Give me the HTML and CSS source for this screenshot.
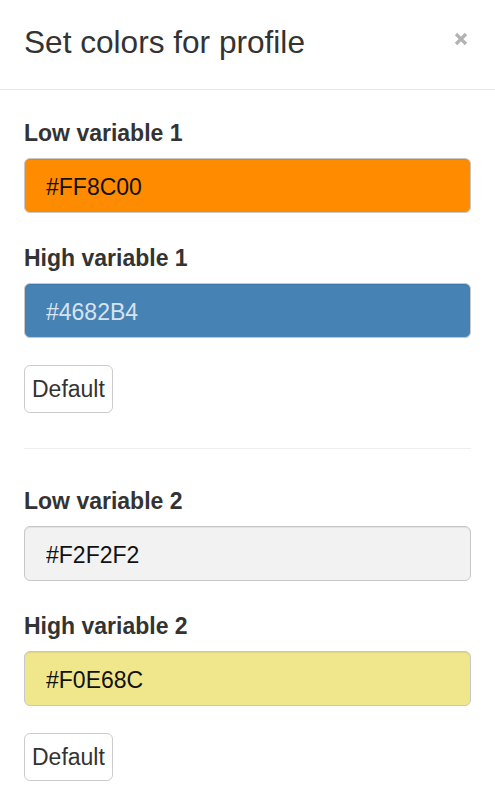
FILE: index.html
```html
<!DOCTYPE html>
<html lang="en">
<head>
<meta charset="utf-8">
<title>Set colors for profile</title>
<link rel="stylesheet" href="styles.css">
</head>
<body>
<div class="modal">
  <div class="modal-header">
    <h4 class="modal-title">Set colors for profile</h4>
    <button class="close" type="button" aria-label="Close">
      <svg width="14" height="14" viewBox="0 0 14 14"><path d="M2 2 L12 12 M12 2 L2 12" stroke="currentColor" stroke-width="3.2" stroke-linecap="butt" fill="none"/></svg>
    </button>
  </div>
  <div class="modal-body">
    <div class="form-group">
      <label class="control-label">Low variable 1</label>
      <input class="form-control c-orange" type="text" value="#FF8C00">
    </div>
    <div class="form-group last">
      <label class="control-label">High variable 1</label>
      <input class="form-control c-blue" type="text" value="#4682B4">
    </div>
    <button class="btn" type="button">Default</button>
    <hr class="divider">
    <div class="form-group">
      <label class="control-label">Low variable 2</label>
      <input class="form-control c-grey" type="text" value="#F2F2F2">
    </div>
    <div class="form-group last">
      <label class="control-label">High variable 2</label>
      <input class="form-control c-yellow" type="text" value="#F0E68C">
    </div>
    <button class="btn" type="button">Default</button>
  </div>
</div>
</body>
</html>
```

FILE: styles.css
```css
* { box-sizing: border-box; }
html, body {
  margin: 0;
  padding: 0;
  background: #fff;
}
body {
  font-family: "Liberation Sans", Arial, Helvetica, sans-serif;
  color: #333;
}
.modal {
  width: 495px;
}
.modal-header {
  display: flex;
  justify-content: space-between;
  align-items: flex-start;
  padding: 22px 24px 26px 24px;
  border-bottom: 1px solid #e5e5e5;
}
.modal-title {
  margin: 0;
  font-size: 31.6px;
  line-height: 41px;
  font-weight: normal;
  color: #333;
}
.close {
  margin: 10px 3px 0 0;
  padding: 0;
  border: 0;
  background: transparent;
  color: #b3b3b3;
  width: 14px;
  height: 14px;
  display: flex;
}
.modal-body {
  padding: 27px 24px 24px 24px;
}
.form-group {
  display: flex;
  flex-direction: column;
  margin-bottom: 29px;
}
.form-group.last {
  margin-bottom: 27px;
}
.control-label {
  font-size: 23px;
  line-height: 32px;
  font-weight: bold;
  color: #333;
  margin-bottom: 9px;
}
.form-control {
  display: block;
  width: 100%;
  height: 55px;
  margin: 0;
  padding: 3px 21px 0 21px;
  font-family: "Liberation Sans", Arial, Helvetica, sans-serif;
  font-size: 23px;
  line-height: 50px;
  color: #111;
  border: 1px solid #c8c8c8;
  border-radius: 6px;
  box-shadow: inset 0 1px 1px rgba(0, 0, 0, 0.075);
  outline: none;
}
.c-orange { background: #FF8C00; }
.c-blue { background: #4682B4; color: #d9e3ee; }
.c-grey { background: #F2F2F2; }
.c-yellow { background: #F0E68C; }
.btn {
  display: inline-block;
  margin: 0;
  padding: 7px 7px;
  font-family: "Liberation Sans", Arial, Helvetica, sans-serif;
  font-size: 23px;
  line-height: 32px;
  color: #333;
  background: #fff;
  border: 1px solid #ccc;
  border-radius: 6px;
}
.divider {
  margin: 35px 0 36px 0;
  border: 0;
  border-top: 1px solid #eee;
  height: 0;
}
```
